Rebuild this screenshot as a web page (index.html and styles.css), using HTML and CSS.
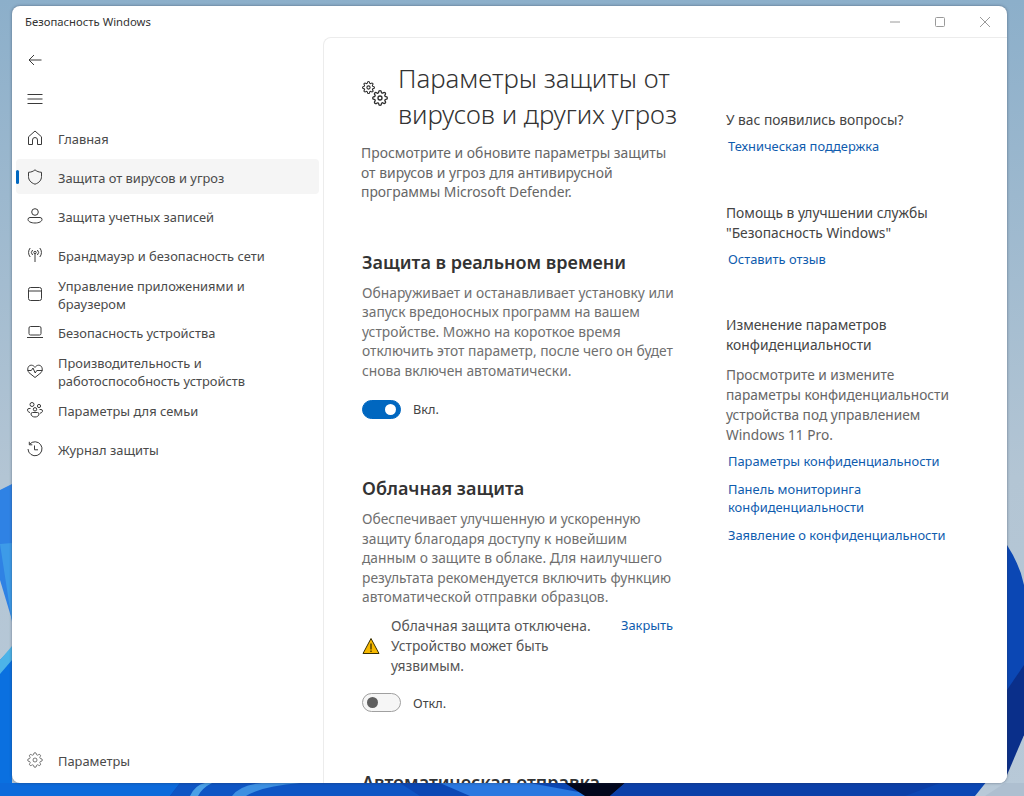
FILE: index.html
```html
<!DOCTYPE html>
<html lang="ru">
<head>
    <meta charset="UTF-8">
    <title>Безопасность Windows</title>
    <link rel="stylesheet" href="styles.css">
</head>
<body>

    <!-- desktop wallpaper behind the window -->
    <svg class="wallpaper" viewBox="0 0 1024 796" preserveAspectRatio="none">
        <defs>
            <linearGradient id="sky" x1="0" y1="0" x2="0" y2="1">
                <stop offset="0" stop-color="#8cafca"/>
                <stop offset="0.6" stop-color="#b3c5d4"/>
                <stop offset="1" stop-color="#b8c9d8"/>
            </linearGradient>
        </defs>
        <rect width="1024" height="796" fill="url(#sky)"/>
        <path d="M0 490 L12 484 L12 620 L0 580 Z" fill="#2f82e4"/>
        <path d="M0 544 L12 543 L12 622 Z" fill="#3d9be8"/>
        <path d="M0 660 L12 648 L12 796 L0 796 Z" fill="#0a70e0"/>
        <path d="M0 660 L12 646 L12 660 L0 674 Z" fill="#4cb3e8"/>
        <path d="M0 796 L0 783 L960 783 L1007 545 Q1020 565 1024 585 L1024 735 L975 796 Z" fill="#0b47b4"/>
        <path d="M1007 690 L1024 665 L1024 735 L1007 775 Z" fill="#0a2f8a"/>
        <path d="M0 783 H180 L170 796 H0 Z" fill="#0c6adb"/>
        <path d="M180 783 H400 L420 796 H170 Z" fill="#0e55c4"/>
        <path d="M190 796 Q195 785 205 783 H212 Q202 788 198 796 Z" fill="#4aa0e6"/>
        <path d="M232 796 Q240 785 262 783 H300 Q262 786 246 796 Z" fill="#3d90e2"/>
        <path d="M440 783 H530 L600 796 H470 Z" fill="#2a78e0"/>
        <path d="M565 783 H625 L610 796 H585 Z" fill="#02061c"/>
        <path d="M625 783 H940 L905 796 H610 Z" fill="#0b3fa8"/>
        <path d="M1005 783 H1024 V796 H985 Z" fill="#aebfd0"/>
    </svg>

    <svg class="defs-only">
        <symbol id="gear" viewBox="0 0 24 24">
            <circle cx="12" cy="12" r="3"/>
            <path d="M19.4 15a1.65 1.65 0 0 0 .33 1.82l.06.06a2 2 0 0 1 0 2.83 2 2 0 0 1-2.83 0l-.06-.06a1.65 1.65 0 0 0-1.82-.33 1.65 1.65 0 0 0-1 1.51V21a2 2 0 0 1-2 2 2 2 0 0 1-2-2v-.09A1.65 1.65 0 0 0 9 19.4a1.65 1.65 0 0 0-1.82.33l-.06.06a2 2 0 0 1-2.83 0 2 2 0 0 1 0-2.83l.06-.06a1.65 1.65 0 0 0 .33-1.82 1.65 1.65 0 0 0-1.51-1H3a2 2 0 0 1-2-2 2 2 0 0 1 2-2h.09A1.65 1.65 0 0 0 4.6 9a1.65 1.65 0 0 0-.33-1.82l-.06-.06a2 2 0 0 1 0-2.83 2 2 0 0 1 2.83 0l.06.06a1.65 1.65 0 0 0 1.82.33H9a1.65 1.65 0 0 0 1-1.51V3a2 2 0 0 1 2-2 2 2 0 0 1 2 2v.09a1.65 1.65 0 0 0 1 1.51 1.65 1.65 0 0 0 1.82-.33l.06-.06a2 2 0 0 1 2.83 0 2 2 0 0 1 0 2.83l-.06.06a1.65 1.65 0 0 0-.33 1.82V9a1.65 1.65 0 0 0 1.51 1H21a2 2 0 0 1 2 2 2 2 0 0 1-2 2h-.09a1.65 1.65 0 0 0-1.51 1z"/>
        </symbol>
    </svg>

    <div class="window">
        <div class="titlebar">
            <span class="app-title">Безопасность Windows</span>
            <div class="window-controls">
                <svg class="ctl" viewBox="0 0 10 10"><path d="M0 5h10"/></svg>
                <svg class="ctl" viewBox="0 0 10 10"><rect x="0.5" y="0.5" width="9" height="9" rx="1"/></svg>
                <svg class="ctl" viewBox="0 0 10 10"><path d="M0 0l10 10M10 0L0 10"/></svg>
            </div>
        </div>

        <div class="window-body">
            <nav class="sidebar">
                <div class="nav-tool nav-back">
                    <svg class="icon" viewBox="0 0 16 16"><path d="M14.500 8H2M7 3L2 8l5 5"/></svg>
                </div>
                <div class="nav-tool nav-menu">
                    <svg class="icon" viewBox="0 0 16 16"><path d="M.5 3.500h15M.5 8h15M.5 12.500h15"/></svg>
                </div>

                <a class="nav-item">
                    <svg class="icon" viewBox="0 0 16 16"><path d="M1.500 14.500V6.800L8 1l6.500 5.800v7.700H10.500V10a2.500 2.500 0 0 0-5 0v4.500z"/></svg>
                    <span>Главная</span>
                </a>
                <a class="nav-item active">
                    <svg class="icon" viewBox="0 0 16 16"><path d="M8 .8c1.800 1.600 3.900 2.400 6.500 2.500v4.200c0 3.600-2.200 6.200-6.500 7.700-4.300-1.500-6.500-4.100-6.500-7.700V3.300C4.100 3.200 6.200 2.400 8 .8z"/></svg>
                    <span>Защита от вирусов и угроз</span>
                </a>
                <a class="nav-item">
                    <svg class="icon" viewBox="0 0 16 16"><circle cx="8" cy="4" r="3.300"/><path d="M3 9.500h10a2 2 0 0 1 2 2c0 2-3 3.500-7 3.500s-7-1.500-7-3.500a2 2 0 0 1 2-2z"/></svg>
                    <span>Защита учетных записей</span>
                </a>
                <a class="nav-item">
                    <svg class="icon" viewBox="0 0 16 16"><circle cx="8" cy="5.500" r="1.200"/><path d="M8 6.500V15M5.600 8a3.500 3.500 0 0 1 0-5M10.400 3a3.500 3.500 0 0 1 0 5M3.200 10a7 7 0 0 1 0-9M12.800 1a7 7 0 0 1 0 9"/></svg>
                    <span>Брандмауэр и безопасность сети</span>
                </a>
                <a class="nav-item">
                    <svg class="icon" viewBox="0 0 16 16"><rect x="1.500" y="1.500" width="13" height="13" rx="2"/><path d="M1.500 5h13"/></svg>
                    <span>Управление приложениями и браузером</span>
                </a>
                <a class="nav-item">
                    <svg class="icon" viewBox="0 0 16 16"><rect x="2" y="2.500" width="12" height="8.500" rx="1.500"/><path d="M0 13.500h16"/></svg>
                    <span>Безопасность устройства</span>
                </a>
                <a class="nav-item">
                    <svg class="icon" viewBox="0 0 16 16"><path d="M2 9.700C-.5 6.500 1 2.200 4.300 2.200c1.700 0 2.900 1 3.700 2.200.8-1.200 2-2.200 3.700-2.200 3.300 0 4.800 4.300 2.300 7.500L8 14.500z"/><path d="M.5 7.500h3.800L6 5l2.200 5 1.600-2.500h5.700"/></svg>
                    <span>Производительность и работоспособность устройств</span>
                </a>
                <a class="nav-item">
                    <svg class="icon" viewBox="0 0 16 16"><circle cx="5" cy="2.500" r="2"/><circle cx="12" cy="4" r="1.600"/><circle cx="8" cy="7.300" r="1.700"/><path d="M3.500 6.500H2a1.500 1.500 0 0 0-1.500 1.500c0 1.200 1 2.300 2.500 2.500M12.500 7.500H14a1.500 1.500 0 0 1 1.500 1.500c0 1-1 2-2.500 2.200M5.500 10.500h5a1.500 1.500 0 0 1 1.500 1.500c0 1.700-1.700 3-4 3s-4-1.300-4-3a1.500 1.500 0 0 1 1.500-1.500z"/></svg>
                    <span>Параметры для семьи</span>
                </a>
                <a class="nav-item">
                    <svg class="icon" viewBox="0 0 16 16"><path d="M2.600 3.300A7 7 0 1 1 1 8M2.300 .8v3h3M7.500 4.500v4.300h3.500"/></svg>
                    <span>Журнал защиты</span>
                </a>

                <a class="nav-item nav-settings">
                    <svg class="icon"><use href="#gear"/></svg>
                    <span>Параметры</span>
                </a>
            </nav>

            <main class="content">
                <div class="content-col">
                    <div class="page-head">
                        <svg class="head-gears" viewBox="0 0 26 26">
                            <svg x="0" y="0" width="13" height="13" viewBox="0 0 24 24"><use href="#gear"/></svg>
                            <svg x="10" y="9" width="16" height="16" viewBox="0 0 24 24"><use href="#gear"/></svg>
                        </svg>
                        <h1>Параметры защиты от вирусов и других угроз</h1>
                    </div>
                    <p class="page-desc">Просмотрите и обновите параметры защиты от вирусов и угроз для антивирусной программы Microsoft Defender.</p>

                    <section class="block">
                        <h2>Защита в реальном времени</h2>
                        <p class="desc">Обнаруживает и останавливает установку или запуск вредоносных программ на вашем устройстве. Можно на короткое время отключить этот параметр, после чего он будет снова включен автоматически.</p>
                        <div class="toggle-row">
                            <div class="toggle on"></div>
                            <span>Вкл.</span>
                        </div>
                    </section>

                    <section class="block">
                        <h2>Облачная защита</h2>
                        <p class="desc">Обеспечивает улучшенную и ускоренную защиту благодаря доступу к новейшим данным о защите в облаке. Для наилучшего результата рекомендуется включить функцию автоматической отправки образцов.</p>
                        <div class="warning">
                            <svg class="warn-icon" viewBox="0 0 18 18">
                                <path class="warn-fill" d="M9 1.500L17 16.500H1z"/>
                                <path class="warn-mark" d="M9 6.500v6M9 13.500v1.500"/>
                            </svg>
                            <p class="warn-text">Облачная защита отключена. Устройство может быть уязвимым.</p>
                            <a class="link warn-close">Закрыть</a>
                        </div>
                        <div class="toggle-row">
                            <div class="toggle"></div>
                            <span>Откл.</span>
                        </div>
                    </section>

                    <section class="block">
                        <h2>Автоматическая отправка образцов</h2>
                    </section>
                </div>

                <aside class="side-col">
                    <div class="side-block">
                        <h3>У вас появились вопросы?</h3>
                        <a class="link">Техническая поддержка</a>
                    </div>
                    <div class="side-block">
                        <h3>Помощь в улучшении службы "Безопасность Windows"</h3>
                        <a class="link">Оставить отзыв</a>
                    </div>
                    <div class="side-block">
                        <h3>Изменение параметров конфиденциальности</h3>
                        <p class="side-text">Просмотрите и измените параметры конфиденциальности устройства под управлением Windows 11 Pro.</p>
                        <a class="link">Параметры конфиденциальности</a>
                        <a class="link">Панель мониторинга конфиденциальности</a>
                        <a class="link">Заявление о конфиденциальности</a>
                    </div>
                </aside>
            </main>
        </div>
    </div>

</body>
</html>
```

FILE: styles.css
```css
* {
    box-sizing: border-box;
}

body {
    font-family: 'Noto Sans', 'Open Sans', sans-serif;
    margin: 0;
    width: 1024px;
    height: 796px;
    overflow: hidden;
    position: relative;
    background-color: #8cafca;
    color: #333;
    font-size: 13.8px;
}

p, h1, h2, h3 {
    margin: 0;
}

.wallpaper {
    position: absolute;
    left: 0;
    top: 0;
    width: 1024px;
    height: 796px;
}

.defs-only {
    position: absolute;
    width: 0;
    height: 0;
}

.window {
    position: relative;
    margin: 6px 0 0 12px;
    width: 995px;
    height: 777px;
    background-color: #fff;
    border-radius: 8px;
    overflow: hidden;
    box-shadow: 0 0 3px rgba(40, 50, 70, 0.55);
    display: flex;
    flex-direction: column;
}

/* title bar */
.titlebar {
    height: 31px;
    flex-shrink: 0;
    display: flex;
    align-items: center;
    justify-content: space-between;
    padding-left: 13px;
}

.app-title {
    font-size: 11.3px;
    color: #333;
}

.window-controls {
    display: flex;
    align-items: center;
    gap: 35px;
    padding-right: 17px;
}

.ctl {
    width: 10px;
    height: 10px;
    fill: none;
    stroke: #9a9a9a;
    stroke-width: 1;
}

.window-body {
    flex: 1;
    display: flex;
    min-height: 0;
}

/* left navigation */
.sidebar {
    width: 311px;
    flex-shrink: 0;
    padding: 0 4px;
    display: flex;
    flex-direction: column;
    font-size: 12.9px;
}

.icon {
    width: 16px;
    height: 16px;
    flex-shrink: 0;
    fill: none;
    stroke: #3a3a3a;
    stroke-width: 1;
    overflow: visible;
}

.nav-tool {
    height: 39px;
    padding-left: 11px;
    display: flex;
    align-items: center;
}

.nav-back {
    margin-top: 3px;
}

.nav-menu {
    margin-bottom: 2.5px;
}

.nav-item {
    height: 35px;
    flex-shrink: 0;
    margin-bottom: 3.9px;
    padding-left: 11px;
    padding-right: 40px;
    display: flex;
    align-items: center;
    gap: 15px;
    border-radius: 4px;
    color: #4a4a4a;
    line-height: 18px;
    position: relative;
}

.nav-item span {
    margin-top: 2px;
}

.nav-item.active {
    background-color: #f5f5f5;
}

.nav-item.active::before {
    content: "";
    position: absolute;
    left: 0;
    top: 11px;
    width: 3px;
    height: 14px;
    border-radius: 2px;
    background-color: #0067c0;
}

.nav-settings {
    margin-top: auto;
    margin-bottom: 6px;
}

.content {
    flex: 1;
    display: flex;
    min-width: 0;
    overflow: hidden;
    background-color: #fff;
    border-top: 1px solid #ececec;
    border-left: 1px solid #ececec;
    border-top-left-radius: 8px;
    padding-left: 38px;
}

.content-col {
    width: 320px;
    flex-shrink: 0;
}

.page-head {
    display: flex;
    align-items: flex-start;
    gap: 10px;
    padding-top: 22px;
}

.head-gears {
    width: 26px;
    height: 26px;
    margin-top: 21px;
    flex-shrink: 0;
    fill: none;
    stroke: #2e2e2e;
    stroke-width: 2;
}

h1 {
    font-size: 25.8px;
    font-weight: 300;
    line-height: 36px;
    color: #333;
}

.page-desc {
    margin-top: 11px;
    margin-left: -1px;
    font-size: 13.9px;
    line-height: 19.5px;
    color: #666;
}

.block {
    margin-top: 48px;
}

.block + .block {
    margin-top: 57px;
}

h2 {
    font-size: 18px;
    font-weight: 600;
    line-height: 24px;
    color: #333;
}

.desc {
    margin-top: 9px;
    line-height: 19.5px;
    color: #6f6f6f;
}

.toggle-row {
    display: flex;
    align-items: center;
    gap: 12px;
    margin-top: 19px;
    height: 20px;
    font-size: 12.7px;
    color: #444;
}

.toggle {
    width: 39px;
    height: 19px;
    border-radius: 10px;
    border: 1px solid #a0a0a0;
    background-color: #f6f6f6;
    position: relative;
}

.toggle::after {
    content: "";
    position: absolute;
    left: 4px;
    top: 3px;
    width: 11px;
    height: 11px;
    border-radius: 50%;
    background-color: #5f5f5f;
}

.toggle.on {
    border-color: #0067c0;
    background-color: #0067c0;
}

.toggle.on::after {
    left: auto;
    right: 4px;
    background-color: #fff;
}

.warning {
    display: flex;
    align-items: center;
    margin-top: 9px;
}

.warning + .toggle-row {
    margin-top: 17px;
}

.warn-icon {
    width: 18px;
    height: 18px;
    flex-shrink: 0;
    margin-right: 11px;
}

.warn-fill {
    fill: #f6b800;
    stroke: #3a3000;
    stroke-width: 1;
    stroke-linejoin: round;
}

.warn-mark {
    fill: none;
    stroke: #2a2200;
    stroke-width: 1.2;
}

.warn-text {
    width: 210px;
    line-height: 20px;
    color: #555;
}

.warn-close {
    align-self: flex-start;
    margin: 0 0 0 20px;
    line-height: 20px;
}

.link {
    display: block;
    font-size: 12.9px;
    line-height: 18px;
    color: #0f5cae;
}

/* right column */
.side-col {
    width: 232px;
    margin-left: 44px;
    padding-top: 72px;
    flex-shrink: 0;
}

.side-block {
    margin-bottom: 47.5px;
}

h3 {
    font-size: 13.8px;
    font-weight: 400;
    line-height: 20px;
    color: #444;
}

.side-block .link {
    margin-top: 7px;
    margin-left: 2px;
}

.side-block .link + .link {
    margin-top: 10px;
}

.side-text {
    margin-top: 10px;
    font-size: 13.7px;
    line-height: 20px;
    color: #666;
}
```
